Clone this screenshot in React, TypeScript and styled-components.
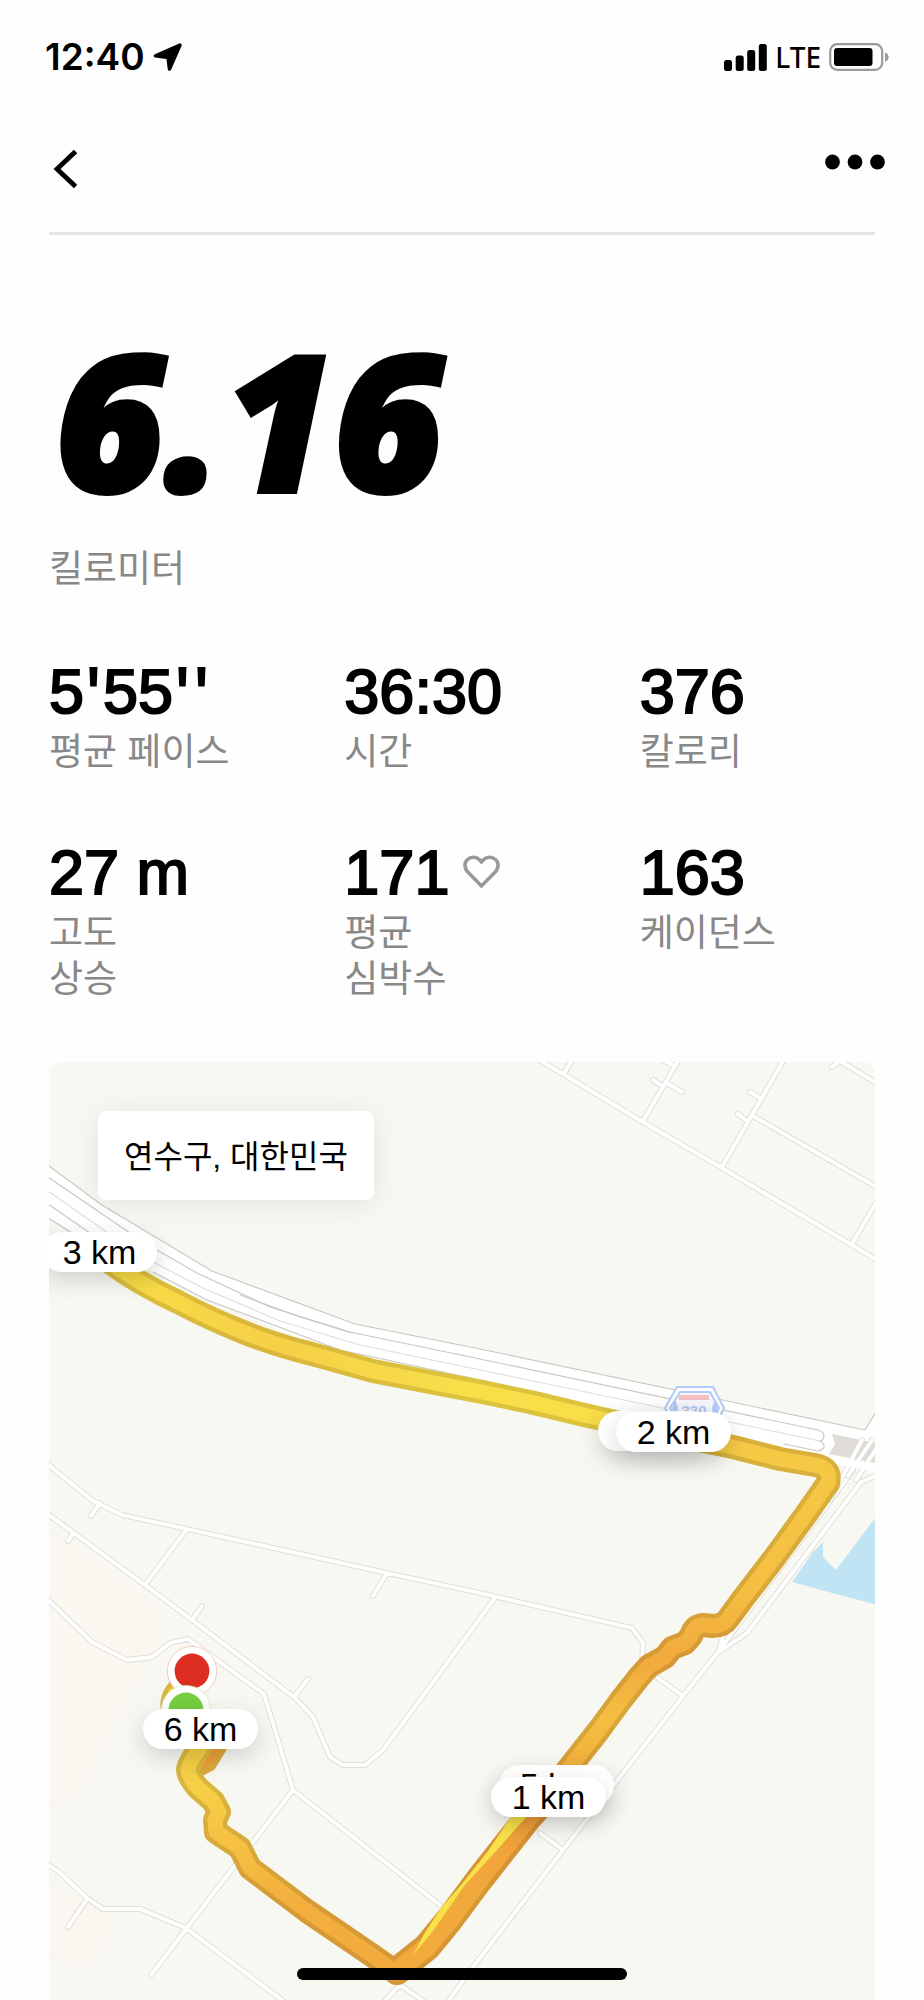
import React from 'react';
import styled, { createGlobalStyle } from 'styled-components';

const GlobalStyle = createGlobalStyle`
  *, *::before, *::after { box-sizing: border-box; }
  body { margin: 0; background: #fefefe; color: #000; }
  h1, p, dl, dt, dd { margin: 0; }
`;

const latin = '"Liberation Sans", Helvetica, Arial, sans-serif';
const korean = '"Liberation Sans", "Noto Sans CJK KR", sans-serif';

/* ---------- layout ---------- */

const Screen = styled.div`
  min-height: 100vh;
  display: flex;
  flex-direction: column;
`;

const StatusBar = styled.header`
  height: 114px;
  padding: 0 35px 0 45px;
  display: flex;
  align-items: center;
  justify-content: space-between;
`;

const StatusGroup = styled.div<{ $gap: number }>`
  display: flex;
  align-items: center;
  gap: ${({ $gap }) => $gap}px;
`;

const Clock = styled.time`
  font: 600 37px/40px Inter, sans-serif;
`;

const Carrier = styled.span`
  font: 500 28px/40px "Noto Sans", sans-serif;
`;

const NavBar = styled.nav`
  height: 121px;
  margin: 0 49px;
  padding-top: 35px;
  display: flex;
  align-items: flex-start;
  justify-content: space-between;
  border-bottom: 3px solid #e4e4e4;
`;

const IconButton = styled.button<{ $outset?: number }>`
  display: block;
  padding: 0;
  margin-right: -${({ $outset = 0 }) => $outset}px;
  border: 0;
  background: none;
  color: inherit;
  cursor: pointer;
  svg { display: block; }
`;

const Main = styled.main`
  padding: 84px 49px 0;
`;

const Distance = styled.h1`
  padding-left: 6px;
  font: italic 800 190px/200px "Open Sans", sans-serif;
  -webkit-text-stroke: 4px #000;
`;

const Caption = styled.p`
  margin-top: 28px;
  font: 400 37px/46px ${korean};
  color: #888;
`;

const Stats = styled.dl`
  margin-top: 66px;
  display: grid;
  grid-template-columns: repeat(3, 1fr);
  gap: 64px 60px;
`;

const Stat = styled.div`
  display: flex;
  flex-direction: column-reverse;
  justify-content: flex-end;
  gap: 7px;
`;

const StatLabel = styled.dt`
  font: 400 37px/46px ${korean};
  color: #888;
  white-space: pre-line;
`;

const StatValue = styled.dd`
  display: flex;
  align-items: center;
  font: 400 63px/64px ${latin};
  white-space: pre;
  -webkit-text-stroke: 2px #000;
  svg { margin-left: 14px; }
`;

const PrimeMark = styled.span`
  font-family: Inter, sans-serif;
`;

const MapCard = styled.section`
  position: relative;
  margin-top: 59px;
  aspect-ratio: 826 / 938;
  overflow: hidden;
  border-radius: 12px 12px 0 0;
  background: #f7f8f2;
`;

const MapArt = styled.svg`
  display: block;
  width: 100%;
  height: 100%;
`;

const Place = styled.p`
  position: absolute;
  top: 49px;
  left: 49px;
  padding: 24px 26px 20px;
  border-radius: 8px;
  background: #fff;
  box-shadow: 0 4px 28px rgba(0, 0, 0, 0.09);
  font: 400 32px/45px ${korean};
`;

const Marker = styled.span<{ $x: number; $y: number }>`
  position: absolute;
  left: ${({ $x }) => ($x / 826) * 100}%;
  top: ${({ $y }) => ($y / 938) * 100}%;
  width: 115px;
  border-radius: 20px;
  background: #fff;
  box-shadow: 0 8px 24px rgba(0, 0, 0, 0.16);
  font: 400 34px/40px ${latin};
  text-align: center;
  white-space: nowrap;
`;

const HomeIndicator = styled.div`
  position: fixed;
  left: 50%;
  bottom: 20px;
  width: 330px;
  height: 12px;
  margin-left: -165px;
  border-radius: 6px;
  background: #000;
`;

/* ---------- icons ---------- */

const LocationIcon = () => (
  <svg width="30" height="30" viewBox="0 0 30 30" aria-hidden="true">
    <path d="M27 3 2.5 13.8 15 15.5 16.5 27Z" fill="#000" stroke="#000" strokeWidth="3.5" strokeLinejoin="round" />
  </svg>
);

const SignalIcon = () => (
  <svg width="43" height="28" viewBox="0 0 43 28" aria-hidden="true">
    <rect x="0" y="17" width="8" height="11" rx="2.5" />
    <rect x="11.7" y="12.5" width="8" height="15.5" rx="2.5" />
    <rect x="23.2" y="7" width="8" height="21" rx="2.5" />
    <rect x="34.8" y="1" width="8" height="27" rx="2.5" />
  </svg>
);

const BatteryIcon = () => (
  <svg width="60" height="28" viewBox="0 0 60 28" aria-hidden="true">
    <rect x="1.2" y="1.2" width="52" height="25.6" rx="7" fill="none" stroke="#9a9a9a" strokeWidth="2.2" />
    <rect x="5" y="5" width="38.5" height="18" rx="3" />
    <path d="M56 9.5q3.600 1.500 3.600 4.700t-3.600 4.700z" fill="#9a9a9a" />
  </svg>
);

const BackIcon = () => (
  <svg width="28" height="40" viewBox="0 0 28 40" aria-hidden="true">
    <path d="M26.500 2.5 8 20 26.500 37.500" fill="none" stroke="#000" strokeWidth="4.800" />
  </svg>
);

const MoreIcon = () => (
  <svg width="60" height="26" viewBox="0 0 60 26" aria-hidden="true">
    <circle cx="7.5" cy="13" r="7.4" />
    <circle cx="30" cy="13" r="7.4" />
    <circle cx="52.500" cy="13" r="7.4" />
  </svg>
);

const HeartIcon = () => (
  <svg width="37" height="34" viewBox="0 0 37 34" aria-hidden="true">
    <path
      d="M18.500 31 5.500 17.800C1 13.200 1 7.500 4.500 4.500 8 1.300 13.300 1.600 16.500 4.800L18.500 6.900 20.500 4.800C23.700 1.600 29 1.300 32.500 4.500 36 7.500 36 13.200 31.500 17.800Z"
      fill="none"
      stroke="#999"
      strokeWidth="3.600"
    />
  </svg>
);

/* ---------- map ---------- */

const streets = [
  'M536 1058 563 1074 643 1122 722 1168 852 1245 880 1262',
  'M852 1244 880 1196',
  'M753 1116 880 1189',
  'M835 1058 880 1085',
  'M722 1167 786 1056',
  'M643 1121 681 1056',
  'M564 1074 574 1056',
  'M838 1062 832 1067',
  'M658 1058 675 1066',
  'M653 1080 662 1086',
  'M667 1083 682 1092',
  'M750 1092 760 1098',
  'M738 1114 747 1121',
  'M45 1462 93 1501 122 1515 187 1529 387 1573 480 1593 632 1628 643 1643 642 1662',
  'M100 1503 91 1516',
  'M187 1529 145 1585',
  'M387 1573 373 1596',
  'M45 1512 145 1585 192 1620 294 1697 313 1717 330 1757 343 1765 365 1765 383 1750 495 1598',
  'M73 1533 68 1541',
  'M192 1620 202 1606',
  'M294 1697 308 1679',
  'M45 1597 92 1642 127 1660 152 1657 170 1643 188 1639 217 1660 264 1694 275 1730 293 1790 440 1905',
  'M293 1790 253 1842 186 1929 151 1975',
  'M45 1863 58 1871 87 1898 103 1909 140 1909 186 1928 290 2006',
  'M87 1899 68 1927',
  'M853 1470 718 1652 683 1696 563 1850 473 1967 446 2004',
  'M880 1474 861 1482 747 1633 719 1652 723 1636',
  'M658 1678 683 1696',
  'M540 1833 563 1850',
  'M382 2004 400 1985 428 2004',
].join(' ');

const crossings = 'M862 1440 830 1500M872 1440 848 1476M880 1443 856 1480';

const upperLeg =
  'M92 1250 127 1274Q150 1289 178 1302 210 1319 243 1332 275 1345 312 1354L373 1371 440 1384 482 1392 530 1402 580 1414 650 1430 733 1447 780 1459 815 1465Q832 1468 828 1483';
const middleLeg =
  'M828 1483 807 1513 775 1557 742 1600 728 1619Q723 1626 713 1626L703 1625Q694 1626 691 1636L685 1643 672 1648 665 1657 649 1666 640 1676 621 1700 599 1730 573 1763 545 1799';
const sharedLeg = 'M545 1799 527 1819 479 1880 450 1919 427 1947 397 1971';
const lowerLeg =
  'M397 1973 373 1956 307 1911 250 1868 240 1848 216 1832 215 1820 219 1812 213 1801 198 1788Q188 1776 188 1770T200 1748L178 1722Q165 1700 182 1687';

type Stops = [offset: number, core: string, edge: string][];

const upperStops: Stops = [
  [0, '#f8de47', '#dcc03c'],
  [0.25, '#f6d046', '#dab63c'],
  [0.5, '#f8de49', '#dbc33d'],
  [0.7, '#f8dd48', '#dbc33d'],
  [0.87, '#f5ca45', '#d9b03b'],
  [1, '#f5c844', '#d9b03b'],
];
const middleStops: Stops = [
  [0, '#f5c844', '#d9b03b'],
  [0.25, '#f5be42', '#d8a839'],
  [0.38, '#f2aa3d', '#d59735'],
  [0.5, '#f4be42', '#d8a839'],
  [0.7, '#ef9f38', '#d48f33'],
  [0.85, '#f2a93c', '#d69835'],
  [1, '#f2ab3c', '#d69835'],
];
const lowerStops: Stops = [
  [0, '#f2ab3c', '#d69835'],
  [0.25, '#f3af3e', '#d59b36'],
  [0.45, '#f5c043', '#d8aa3a'],
  [0.65, '#f6cf46', '#d9b53c'],
  [1, '#f6d046', '#d9b63c'],
];

type Line = { x1?: number; y1?: number; x2?: number; y2?: number };

const LegPaint = ({ id, stops, line }: { id: string; stops: Stops; line: Line }) => (
  <>
    <linearGradient id={`${id}-core`} gradientUnits="userSpaceOnUse" x1="0" y1="0" x2="0" y2="0" {...line}>
      {stops.map(([offset, core]) => (
        <stop key={offset} offset={offset} stopColor={core} />
      ))}
    </linearGradient>
    <linearGradient id={`${id}-edge`} gradientUnits="userSpaceOnUse" x1="0" y1="0" x2="0" y2="0" {...line}>
      {stops.map(([offset, , edge]) => (
        <stop key={offset} offset={offset} stopColor={edge} />
      ))}
    </linearGradient>
  </>
);

const RunMap = () => (
  <MapArt viewBox="49 1062 826 938" role="img" aria-label="러닝 경로">
    <defs>
      <LegPaint id="upper" stops={upperStops} line={{ x1: 92, x2: 829 }} />
      <LegPaint id="middle" stops={middleStops} line={{ y1: 1465, y2: 1973 }} />
      <LegPaint id="lower" stops={lowerStops} line={{ y1: 1973, y2: 1690 }} />
      <filter id="soft" x="-20%" y="-20%" width="140%" height="140%">
        <feGaussianBlur stdDeviation="8" />
      </filter>
    </defs>

    <g fill="#faf6f0" filter="url(#soft)">
      <path d="M20 1515 60 1530 145 1590 172 1620 150 1670 110 1740 80 1800 20 1820Z" />
      <path d="M20 1860 60 1885 120 1915 108 1950 85 1975 20 1950Z" />
    </g>
    <path d="M792 1582 813 1552 823 1542 823 1557 836 1570 878 1514 878 1605 832 1593Z" fill="#c0e4f4" />

    <g fill="none" strokeLinecap="round" strokeLinejoin="round">
      <path d={streets} stroke="#e0dfd9" strokeWidth="5.800" />
      <path d={streets} stroke="#fff" strokeWidth="3.800" />
    </g>

    <path
      d="M45 1163 102 1205 212 1271 355 1324 480 1349 865 1430 880 1405 880 1473 820 1460 490 1390 340 1355 207 1300 153 1272 72 1233 45 1216Z"
      fill="#fff"
    />
    <path d="M832 1434 880 1444 880 1464 829 1454 835 1444Z" fill="#dfdcd7" />
    <g fill="none" strokeLinecap="round">
      <path d={crossings} stroke="#e0ded8" strokeWidth="5.600" />
      <path d={crossings} stroke="#fff" strokeWidth="3.800" />
    </g>
    <path d="M829 1459 880 1469" stroke="#fff" strokeWidth="7" />
    <g fill="none" stroke="#cbc7c1" strokeWidth="1.100">
      <path d="M45 1163 102 1205 212 1271 355 1324 480 1349 865 1430 876 1412" />
      <path d="M45 1175 130 1233 157 1250 197 1273 270 1307 350 1332 480 1359 818 1430q6 2 6 6t-4 5q5 3 4 6t-6 4l-34-7" />
      <path d="M45 1202 90 1233M45 1216 72 1233M153 1272 207 1300 340 1350 490 1382M240 1295 300 1317 352 1333" />
      <path d="M45 1189 108 1233 153 1262 203 1288 280 1321 360 1345 490 1372 820 1441" strokeOpacity="0.6" />
    </g>

    <g strokeLinejoin="round">
      <path d="M677 1387H713L724 1408 713 1430H677L665 1408Z" fill="#fff" stroke="#b3cbf8" strokeWidth="2" />
      <path d="M680 1392H710L719 1408 710 1426H680L670 1408Z" fill="#f5f7fc" stroke="#b3cbf8" strokeWidth="2" />
      <path d="M675 1399 672 1409 677 1418 678 1408ZM715 1399 718 1409 713 1418 712 1408Z" fill="#b3cbf8" />
      <rect x="679" y="1395" width="30" height="5" fill="#f3bfc0" />
      <text x="694" y="1416" textAnchor="middle" fontFamily="Liberation Sans" fontWeight="700" fontSize="15" fill="#b0c8f6">
        330
      </text>
    </g>

    <g fill="none" strokeLinejoin="round" strokeLinecap="round">
      <path d="M190 1772 208 1763 219 1745" stroke="#d9a93a" strokeWidth="18" />
      <path d="M190 1770 207 1758 215 1745" stroke="#ee9c38" strokeWidth="12" />
      <path d={upperLeg} stroke="url(#upper-edge)" strokeWidth="24" />
      <path d={middleLeg} stroke="url(#middle-edge)" strokeWidth="24" />
      <path d={sharedLeg} stroke="url(#middle-edge)" strokeWidth="28" />
      <path d={lowerLeg} stroke="url(#lower-edge)" strokeWidth="24" />
      <path d={upperLeg} stroke="url(#upper-core)" strokeWidth="15" />
      <path d={lowerLeg} stroke="url(#lower-core)" strokeWidth="15" />
      <path d={middleLeg} stroke="url(#middle-core)" strokeWidth="15" />
      <path d={sharedLeg} stroke="url(#middle-core)" strokeWidth="19" />
    </g>
    <path
      d="M512 1815H528L497 1850 464 1886 449 1908 430 1935 413 1955 424 1934 441 1908 461 1885 488 1851Z"
      fill="#f9e14a"
    />

    <circle cx="192" cy="1671" r="24.600" fill="#fff" stroke="#f0a9a4" strokeWidth="0.600" />
    <circle cx="192" cy="1671" r="17.400" fill="#dd2f21" />
    <circle cx="186" cy="1710" r="24.600" fill="#fff" stroke="#bfe8ab" strokeWidth="0.600" />
    <circle cx="186" cy="1710" r="17.400" fill="#76cf40" />
  </MapArt>
);

/* ---------- data ---------- */

const stats: { label: string; value: React.ReactNode; heart?: boolean }[] = [
  {
    label: '평균 페이스',
    value: (
      <>
        5<PrimeMark>'</PrimeMark>55<PrimeMark>''</PrimeMark>
      </>
    ),
  },
  { label: '시간', value: '36:30' },
  { label: '칼로리', value: '376' },
  { label: '고도\n상승', value: '27 m' },
  { label: '평균\n심박수', value: '171', heart: true },
  { label: '케이던스', value: '163' },
];

const markers = [
  { km: 6, x: 94, y: 647 },
  { km: 5, x: 450, y: 703 },
  { km: 4, x: 549, y: 349 },
  { km: 3, x: -7, y: 170 },
  { km: 2, x: 567, y: 350 },
  { km: 1, x: 442, y: 715 },
];

export default function App() {
  return (
    <Screen>
      <GlobalStyle />
      <StatusBar>
        <StatusGroup $gap={8}>
          <Clock>12:40</Clock>
          <LocationIcon />
        </StatusGroup>
        <StatusGroup $gap={8}>
          <SignalIcon />
          <Carrier>LTE</Carrier>
          <BatteryIcon />
        </StatusGroup>
      </StatusBar>
      <NavBar>
        <IconButton type="button" aria-label="뒤로">
          <BackIcon />
        </IconButton>
        <IconButton type="button" aria-label="더 보기" $outset={10}>
          <MoreIcon />
        </IconButton>
      </NavBar>
      <Main>
        <Distance>6.16</Distance>
        <Caption>킬로미터</Caption>
        <Stats>
          {stats.map(({ label, value, heart }) => (
            <Stat key={label}>
              <StatLabel>{label}</StatLabel>
              <StatValue>
                {value}
                {heart && <HeartIcon />}
              </StatValue>
            </Stat>
          ))}
        </Stats>
        <MapCard>
          <RunMap />
          <Place>연수구, 대한민국</Place>
          {markers.map(({ km, x, y }) => (
            <Marker key={km} $x={x} $y={y}>
              {km} km
            </Marker>
          ))}
        </MapCard>
      </Main>
      <HomeIndicator />
    </Screen>
  );
}
